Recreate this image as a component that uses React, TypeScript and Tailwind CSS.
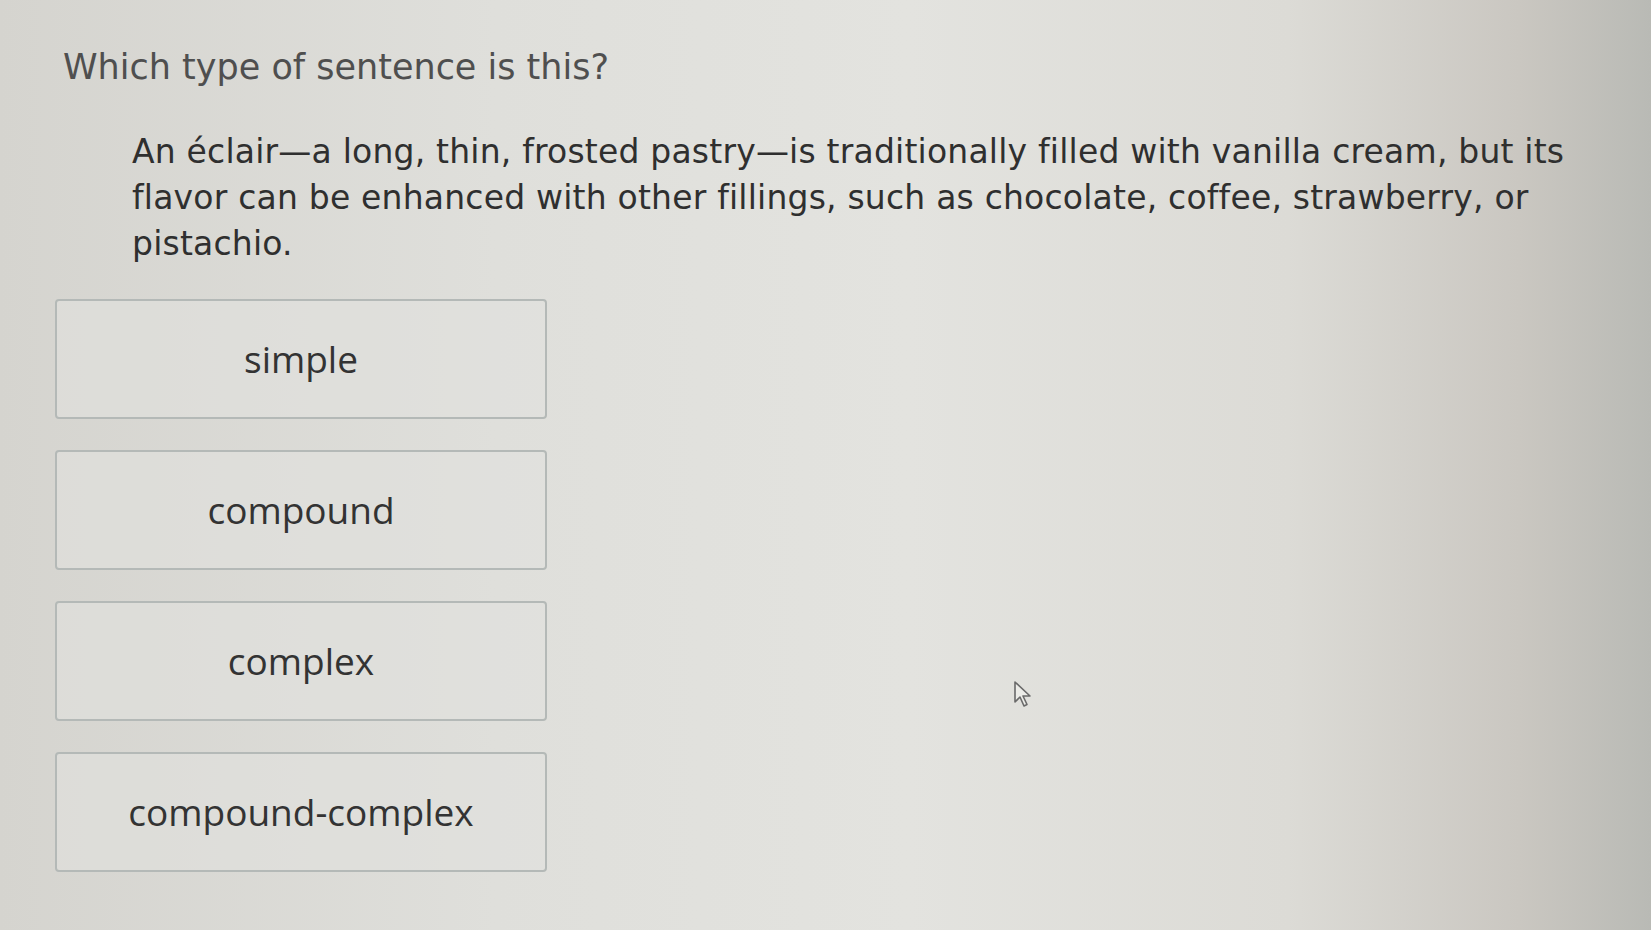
import React from "react";

const CHOICES = ["simple", "compound", "complex", "compound-complex"];

export default function App() {
  return (
    <div className="relative h-[930px] w-full overflow-hidden bg-[linear-gradient(90deg,#d5d4cf_0%,#dfdfdb_30%,#e3e3df_55%,#dcdbd6_78%,#cac7c1_92%,#b9bab5_100%)] font-['DejaVu_Sans',Verdana,sans-serif]">
      <h1 className="pl-[63px] pt-[46px] text-[35px] leading-[42px] font-normal text-[#4f4f4f]">
        Which type of sentence is this?
      </h1>

      <p className="ml-[132px] mt-[41px] w-[1500px] text-[33px] leading-[46px] tracking-[0.2px] text-[#2f2f2f]">
        An éclair—a long, thin, frosted pastry—is traditionally filled with vanilla cream, but its
        <br />
        flavor can be enhanced with other fillings, such as chocolate, coffee, strawberry, or
        <br />
        pistachio.
      </p>

      <div className="ml-[55px] mt-[32px] flex w-[492px] flex-col gap-[31px]">
        {CHOICES.map((c) => (
          <button
            key={c}
            className="flex h-[120px] w-full items-center justify-center rounded-[4px] border-2 border-[#b4b9b7] bg-[#e1e1dd]/60 font-['Open_Sans',sans-serif] text-[37px] text-[#333333]"
          >
            {c}
          </button>
        ))}
      </div>

      {/* mouse cursor */}
      <svg
        className="absolute left-[1013px] top-[680px]"
        width="22"
        height="30"
        viewBox="0 0 22 30"
        fill="none"
      >
        <path
          d="M2 2 L2 22 L7 17 L11 26 L14 24.5 L10 16 L17 16 Z"
          stroke="#6a6a6a"
          strokeWidth="1.6"
          strokeLinejoin="round"
          fill="#ecece8"
        />
      </svg>
    </div>
  );
}
